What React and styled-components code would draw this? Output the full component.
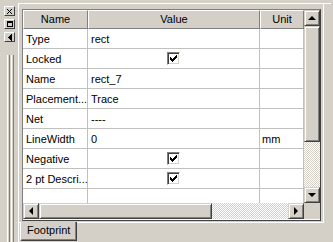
import React from 'react'
import styled, { createGlobalStyle } from 'styled-components'

const GlobalStyle = createGlobalStyle`
  html, body { margin: 0; padding: 0; background: #d4d0c8; }
`

const FACE = '#d4d0c8'
const SHADOW = '#808080'
const DARK = '#404040'

const Root = styled.div`
  display: flex;
  width: 333px;
  height: 242px;
  overflow: hidden;
  background: ${FACE};
  font: 11px 'Liberation Sans', Arial, sans-serif;
  color: #000;
`

const DockBar = styled.div`
  width: 18px;
  flex: none;
  display: flex;
  flex-direction: column;
  align-items: flex-start;
  gap: 3px;
  padding: 6px 0 0 4px;
  box-sizing: border-box;
`

const DockButton = styled.div`
  width: 11px;
  height: 10px;
  box-sizing: border-box;
  background: ${FACE};
  border: 1px solid;
  border-color: #fff ${DARK} ${DARK} #fff;
  display: flex;
  align-items: center;
  justify-content: center;
`

const Gripper = styled.div`
  flex: 1;
  display: flex;
  gap: 1px;
  margin: 10px 0 0 3px;
`

const GripBar = styled.div`
  width: 1px;
  border-left: 1px solid #fff;
  border-right: 1px solid ${SHADOW};
`

const Main = styled.div`
  flex: 1;
  min-width: 0;
  display: flex;
  flex-direction: column;
  padding-top: 3px;
`

const Panel = styled.div`
  flex: 1;
  display: flex;
  flex-direction: column;
  border-top: 1px solid #fff;
  border-left: 1px solid #fff;
  width: 313px;
  box-sizing: border-box;
`

const TabPage = styled.div`
  width: 305px;
  box-sizing: border-box;
  border-right: 1px solid #fff;
  border-bottom: 1px solid #fff;
  padding: 5px 2px 1px 3px;
`

const GridBox = styled.div`
  width: 299px;
  height: 212px;
  box-sizing: border-box;
  border: 1px solid;
  border-color: ${SHADOW} ${DARK} ${DARK} ${SHADOW};
  display: flex;
  flex-direction: column;
  overflow: hidden;
  background: #fff;
`

const Body = styled.div`
  display: flex;
  height: 193px;
  flex: none;
`

const Table = styled.div`
  width: 281px;
  flex: none;
  display: grid;
  grid-template-columns: 65px 172px 44px;
  grid-template-rows: 19px;
  grid-auto-rows: 20px;
  overflow: hidden;
  align-content: start;
`

const HeadCell = styled.div`
  box-sizing: border-box;
  background: ${FACE};
  border: 1px solid;
  border-color: #fff ${SHADOW} ${SHADOW} #fff;
  box-shadow: 1px 0 0 ${DARK};
  text-align: center;
  line-height: 16px;
  white-space: nowrap;
  overflow: hidden;
`

const Cell = styled.div`
  box-sizing: border-box;
  border-right: 1px solid #c0c0c0;
  border-bottom: 1px solid #c0c0c0;
  padding-left: ${p => (p.$unit ? 2 : 3)}px;
  white-space: nowrap;
  overflow: hidden;
  display: flex;
  align-items: center;
  justify-content: ${p => (p.$center ? 'center' : 'flex-start')};
`

const CheckBox = styled.div`
  width: 13px;
  height: 13px;
  box-sizing: border-box;
  border: 1px solid;
  border-color: ${SHADOW} #fff #fff ${SHADOW};
  box-shadow: inset 1px 1px 0 ${DARK}, inset -1px -1px 0 ${FACE};
  background: #fff;
  display: flex;
  align-items: center;
  justify-content: center;
  margin-left: -3px;
`

const VBar = styled.div`
  width: 16px;
  height: 193px;
  flex: none;
  display: flex;
  flex-direction: column;
`

const HBar = styled.div`
  flex: 1;
  height: 16px;
  display: flex;
`

const BottomRow = styled.div`
  display: flex;
  height: 16px;
  flex: none;
`

const Corner = styled.div`
  width: 16px;
  background: ${FACE};
`

const ScrollButton = styled.div`
  width: 16px;
  height: 16px;
  flex: none;
  box-sizing: border-box;
  background: ${FACE};
  border: 1px solid;
  border-color: ${FACE} ${DARK} ${DARK} ${FACE};
  box-shadow: inset 1px 1px 0 #fff, inset -1px -1px 0 ${SHADOW};
  display: flex;
  align-items: center;
  justify-content: center;
`

const Thumb = styled.div`
  flex: none;
  box-sizing: border-box;
  background: ${FACE};
  border: 1px solid;
  border-color: ${FACE} ${DARK} ${DARK} ${FACE};
  box-shadow: inset 1px 1px 0 #fff, inset -1px -1px 0 ${SHADOW};
`

const Track = styled.div`
  flex: 1;
  background-image: conic-gradient(#fff 25%, ${FACE} 0 50%, #fff 0 75%, ${FACE} 0);
  background-size: 2px 2px;
`

const Arrow = styled.div`
  width: 0;
  height: 0;
  border-style: solid;
  border-color: transparent;
  ${p => p.$dir === 'up' && 'border-width: 0 4px 4px; border-bottom-color: #000; margin-top: -1px;'}
  ${p => p.$dir === 'down' && 'border-width: 4px 4px 0; border-top-color: #000;'}
  ${p => p.$dir === 'left' && 'border-width: 4px 4px 4px 0; border-right-color: #000; margin-left: -1px;'}
  ${p => p.$dir === 'right' && 'border-width: 4px 0 4px 4px; border-left-color: #000;'}
`

const TabStrip = styled.div`
  height: 20px;
  display: flex;
  padding-left: 1px;
`

const Tab = styled.div`
  width: 57px;
  height: 19px;
  margin-top: -1px;
  box-sizing: border-box;
  background: ${FACE};
  border-left: 1px solid #fff;
  border-right: 1px solid ${DARK};
  border-bottom: 1px solid ${DARK};
  border-bottom-left-radius: 2px;
  box-shadow: inset -1px -1px 0 ${SHADOW};
  padding-left: 6px;
  line-height: 17px;
`

const Tick = () => (
  <svg width="7" height="7" viewBox="0 0 7 7">
    <path d="M0 2h1v1h1v1h1V3h1V2h1V1h1V0h1v3H6v1H5v1H4v1H3v1H2V6H1V5H0z" fill="#000" />
  </svg>
)

const rows = [
  { name: 'Type', value: 'rect' },
  { name: 'Locked', check: true },
  { name: 'Name', value: 'rect_7' },
  { name: 'Placement...', value: 'Trace' },
  { name: 'Net', value: '----' },
  { name: 'LineWidth', value: '0', unit: 'mm' },
  { name: 'Negative', check: true },
  { name: '2 pt Descri...', check: true },
  { name: '' }
]

export default function App () {
  return (
    <Root>
      <GlobalStyle />
      <DockBar>
        <DockButton>
          <svg width="5" height="5" viewBox="0 0 5 5">
            <path d="M0 0h1v1h1v1h1V1h1V0h1v1H4v1H3v1h1v1h1v1H4V4H3V3H2v1H1v1H0V4h1V3h1V2H1V1H0z" fill="#000" />
          </svg>
        </DockButton>
        <DockButton>
          <svg width="6" height="6" viewBox="0 0 6 6">
            <path d="M0 0h6v6H0zM1 2v3h4V2z" fill="#000" fillRule="evenodd" />
          </svg>
        </DockButton>
        <DockButton>
          <svg width="4" height="7" viewBox="0 0 4 7">
            <path d="M3 0h1v7H3V6H2V5H1V4H0V3h1V2h1V1h1z" fill="#000" />
          </svg>
        </DockButton>
        <Gripper>
          <GripBar />
          <GripBar />
        </Gripper>
      </DockBar>
      <Main>
        <Panel>
          <TabPage>
            <GridBox>
              <Body>
                <Table>
                  <HeadCell>Name</HeadCell>
                  <HeadCell>Value</HeadCell>
                  <HeadCell>Unit</HeadCell>
                  {rows.map((r, i) => (
                    <React.Fragment key={i}>
                      <Cell>{r.name}</Cell>
                      <Cell $center={r.check}>{r.check ? <CheckBox><Tick /></CheckBox> : r.value}</Cell>
                      <Cell $unit>{r.unit}</Cell>
                    </React.Fragment>
                  ))}
                </Table>
                <VBar>
                  <ScrollButton><Arrow $dir='up' /></ScrollButton>
                  <Thumb style={{ height: 116 }} />
                  <Track />
                  <ScrollButton><Arrow $dir='down' /></ScrollButton>
                </VBar>
              </Body>
              <BottomRow>
                <HBar>
                  <ScrollButton><Arrow $dir='left' /></ScrollButton>
                  <Thumb style={{ width: 173 }} />
                  <Track />
                  <ScrollButton><Arrow $dir='right' /></ScrollButton>
                </HBar>
                <Corner />
              </BottomRow>
            </GridBox>
          </TabPage>
          <TabStrip>
            <Tab>Footprint</Tab>
          </TabStrip>
        </Panel>
      </Main>
    </Root>
  )
}
